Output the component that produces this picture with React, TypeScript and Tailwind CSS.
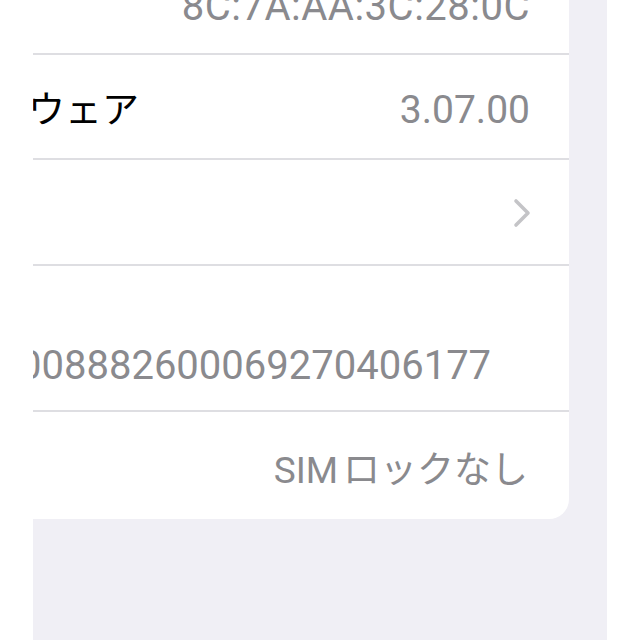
const font = { fontFamily: 'Roboto, "Noto Sans CJK JP", sans-serif' };

function Chevron() {
  return (
    <svg width="18" height="30" viewBox="0 0 18 30" fill="none">
      <path d="M3 3l12 12L3 27" stroke="#c4c4c7" strokeWidth="3.6" strokeLinecap="round" strokeLinejoin="round" />
    </svg>
  );
}

export default function App() {
  return (
    <div className="flex h-[640px] w-[640px] bg-white">
      <div className="w-[33px] shrink-0 bg-white" />
      <div className="w-[574px] shrink-0 bg-[#f0eff5]">
        <div className="w-[536px] overflow-hidden rounded-br-[20px] bg-white">
          {/* mac address row, mostly scrolled off the top */}
          <div className="flex h-[55px] items-start justify-end border-b-2 border-[#dedee2] pr-[39px]">
            <span className="-mt-[13px] text-[40px] leading-[40px] tracking-[0.5px] text-[#8a8a8e]" style={font}>
              8C:7A:AA:3C:28:0C
            </span>
          </div>

          <div className="flex h-[105px] items-center justify-between border-b-2 border-[#dedee2] pr-[39px] pt-[8px]">
            <span className="-ml-[152px] whitespace-nowrap text-[37px] leading-[40px] text-black" style={font}>
              ファームウェア
            </span>
            <span className="text-[39px] leading-[39px] text-[#8a8a8e]" style={font}>
              3.07.00
            </span>
          </div>

          <div className="flex h-[106px] items-center justify-end border-b-2 border-[#dedee2] pr-[38px] pt-[2px]">
            <Chevron />
          </div>

          <div className="flex h-[146px] items-end border-b-2 border-[#dedee2] pb-[24px]">
            <span className="-ml-[14px] whitespace-nowrap text-[40px] leading-[40px] text-[#8a8a8e]" style={font}>
              008882600069270406177
            </span>
          </div>

          <div className="flex h-[107px] items-center justify-end pr-[41px] pt-[10px]">
            <span className="whitespace-nowrap text-[37px] leading-[40px] text-[#8a8a8e]" style={font}>
              SIM<span className="ml-[5px]">ロックなし</span>
            </span>
          </div>
        </div>
      </div>
      <div className="w-[33px] shrink-0 bg-white" />
    </div>
  );
}
